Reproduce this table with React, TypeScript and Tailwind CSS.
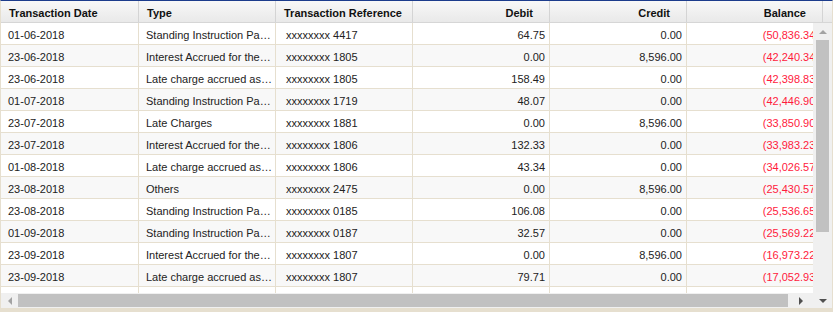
import React from "react";

const rows = [
  ["01-06-2018", "Standing Instruction Pa…", "xxxxxxxx 4417", "64.75", "0.00", "(50,836.34)"],
  ["23-06-2018", "Interest Accrued for the…", "xxxxxxxx 1805", "0.00", "8,596.00", "(42,240.34)"],
  ["23-06-2018", "Late charge accrued as…", "xxxxxxxx 1805", "158.49", "0.00", "(42,398.83)"],
  ["01-07-2018", "Standing Instruction Pa…", "xxxxxxxx 1719", "48.07", "0.00", "(42,446.90)"],
  ["23-07-2018", "Late Charges", "xxxxxxxx 1881", "0.00", "8,596.00", "(33,850.90)"],
  ["23-07-2018", "Interest Accrued for the…", "xxxxxxxx 1806", "132.33", "0.00", "(33,983.23)"],
  ["01-08-2018", "Late charge accrued as…", "xxxxxxxx 1806", "43.34", "0.00", "(34,026.57)"],
  ["23-08-2018", "Others", "xxxxxxxx 2475", "0.00", "8,596.00", "(25,430.57)"],
  ["23-08-2018", "Standing Instruction Pa…", "xxxxxxxx 0185", "106.08", "0.00", "(25,536.65)"],
  ["01-09-2018", "Standing Instruction Pa…", "xxxxxxxx 0187", "32.57", "0.00", "(25,569.22)"],
  ["23-09-2018", "Interest Accrued for the…", "xxxxxxxx 1807", "0.00", "8,596.00", "(16,973.22)"],
  ["23-09-2018", "Late charge accrued as…", "xxxxxxxx 1807", "79.71", "0.00", "(17,052.93)"],
  ["01-10-2018", "Standing Instruction Pa…", "xxxxxxxx 0191", "51.02", "0.00", "(17,103.95)"],
];

const headers = [
  { label: "Transaction Date", w: "w-[138px]", align: "text-left pl-[8px]" },
  { label: "Type", w: "w-[137px]", align: "text-left pl-[8px]" },
  { label: "Transaction Reference", w: "w-[137px]", align: "text-left pl-[8px]" },
  { label: "Debit", w: "w-[137px]", align: "text-right pr-[16px]" },
  { label: "Credit", w: "w-[137px]", align: "text-right pr-[16px]" },
  { label: "Balance", w: "w-[136px]", align: "text-right pr-[16px]" },
];

export default function App() {
  return (
    <div className="w-[838px] h-[314px] bg-white" style={{ fontFamily: '"Liberation Sans", Arial, sans-serif' }}>
      <div className="w-[833px] h-[312px] flex flex-col border-t border-t-[#1c3c8c] border-x border-b-4 border-x-[#e6dfcf] border-b-[#e6dfcf] overflow-hidden">
        {/* header */}
        <div className="flex h-[22px] shrink-0 bg-gradient-to-b from-[#f8f8f8] to-[#e9e9e9] border-b border-[#d6d6d6]">
          {headers.map((h) => (
            <div
              key={h.label}
              className={`${h.w} shrink-0 h-full leading-[24px] text-[11px] font-bold text-[#111] border-r border-[#d4d4d4] ${h.align}`}
            >
              {h.label}
            </div>
          ))}
          <div className="flex-1" />
        </div>

        <div className="flex flex-1 min-h-0">
          {/* body + horizontal scrollbar */}
          <div className="flex flex-col flex-1 min-w-0">
            <div className="flex-1 min-h-0 overflow-hidden">
              {rows.map((r, i) => (
                <div
                  key={i}
                  className={`flex h-[22px] w-[822px] border-b border-[#e6dfcf] text-[11px] text-[#222] leading-[25px] whitespace-nowrap ${i % 2 === 1 ? "bg-[#f8f8f8]" : "bg-white"}`}
                >
                  <div className="w-[138px] shrink-0 pl-[7px] border-r border-[#e6dfcf]">{r[0]}</div>
                  <div className="w-[137px] shrink-0 pl-[7px] overflow-hidden border-r border-[#e6dfcf]">{r[1]}</div>
                  <div className="w-[137px] shrink-0 pl-[10px] border-r border-[#e6dfcf]">{r[2]}</div>
                  <div className="w-[137px] shrink-0 pr-[4px] text-right border-r border-[#e6dfcf]">{r[3]}</div>
                  <div className="w-[137px] shrink-0 pr-[4px] text-right border-r border-[#e6dfcf]">{r[4]}</div>
                  <div className="w-[136px] shrink-0 pr-[4px] text-right text-[#ff1a3c]">{r[5]}</div>
                </div>
              ))}
            </div>
            {/* horizontal scrollbar */}
            <div className="h-[15px] shrink-0 bg-[#f0f0f0] flex items-center">
              <div className="w-[17px] h-full flex items-center justify-center">
                <div className="w-0 h-0 border-y-[4px] border-y-transparent border-r-[4px] border-r-[#a3a3a3]" />
              </div>
              <div className="flex-1 h-[13px] bg-[#c1c1c1]" />
              <div className="w-[25px] h-full flex items-center justify-center">
                <div className="w-0 h-0 border-y-[4px] border-y-transparent border-l-[4px] border-l-[#505050]" />
              </div>
            </div>
          </div>

          {/* vertical scrollbar */}
          <div className="w-[19px] shrink-0 bg-[#f0f0f0] flex flex-col items-center">
            <div className="h-[17px] w-full flex items-center justify-center">
              <div className="w-0 h-0 border-x-[4px] border-x-transparent border-b-[4px] border-b-[#a3a3a3]" />
            </div>
            <div className="w-[13px] h-[192px] bg-[#c1c1c1]" />
            <div className="flex-1" />
            <div className="h-[15px] w-full flex items-center justify-center">
              <div className="w-0 h-0 border-x-[4px] border-x-transparent border-t-[4px] border-t-[#505050]" />
            </div>
          </div>
        </div>
      </div>
    </div>
  );
}
